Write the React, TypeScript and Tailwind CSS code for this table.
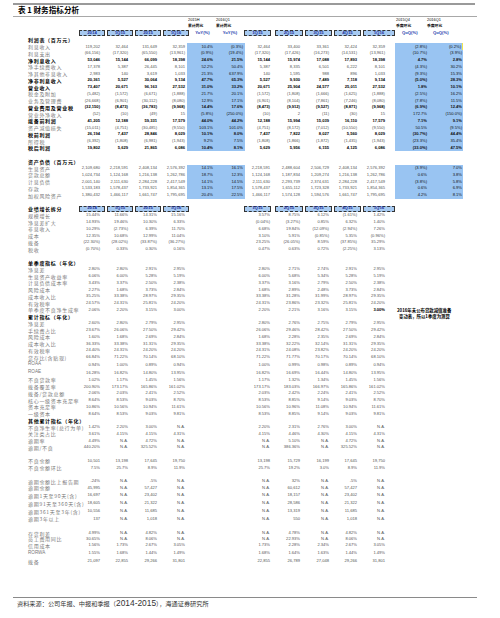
import React from "react";

type Row = {
  t: "d" | "h" | "b" | "x";
  label?: string;
  l?: string[];
  r?: string[];
  bold?: boolean;
  h?: string;
  blue?: boolean;
  note?: string;
  boldLast?: boolean;
  mark?: boolean;
};

const NA = "N.A.";

const rows: Row[] = [
  { t: "h", label: "利润表（百万元）" },
  { t: "d", blue: true, mark: true, label: "利息收入", l: ["119,202", "32,464", "131,649", "32,359", "10.4%", "(0.3%)"], r: ["32,464", "33,400", "33,361", "32,424", "32,359", "(2.8%)", "(0.2%)"] },
  { t: "d", blue: true, label: "利息支出", l: ["(66,156)", "(17,320)", "(65,550)", "(13,961)", "(0.9%)", "(19.4%)"], r: ["(17,320)", "(17,426)", "(16,273)", "(14,531)", "(13,961)", "(10.7%)", "(3.9%)"] },
  { t: "d", blue: true, bold: true, label: "净利息收入", l: ["53,046", "15,144", "66,099", "18,398", "24.6%", "21.5%"], r: ["15,144", "15,974", "17,088", "17,893", "18,398", "4.7%", "2.8%"] },
  { t: "d", blue: true, label: "净手续费收入", l: ["17,378", "5,387", "26,445", "8,101", "52.2%", "50.4%"], r: ["5,387", "8,335", "6,501", "6,222", "8,101", "(4.3%)", "30.2%"] },
  { t: "d", blue: true, label: "净其他非息收入", l: ["2,983", "140", "3,619", "1,033", "21.3%", "637.9%"], r: ["140", "1,595", "988", "896", "1,033", "(9.3%)", "15.3%"] },
  { t: "d", blue: true, bold: true, label: "净非利息收入", l: ["20,361", "5,527", "30,064", "9,134", "47.7%", "65.3%"], r: ["5,527", "9,930", "7,489", "7,118", "9,134", "(5.0%)", "28.3%"] },
  { t: "d", blue: true, bold: true, label: "营业收入", l: ["73,407", "20,671", "96,163", "27,532", "31.0%", "33.2%"], r: ["20,671", "25,904", "24,577", "25,011", "27,532", "1.8%", "10.1%"] },
  { t: "d", blue: true, label: "税金及附加", l: ["(5,482)", "(1,572)", "(6,671)", "(1,888)", "21.7%", "20.1%"], r: ["(1,572)", "(1,808)", "(1,666)", "(1,625)", "(1,888)", "(2.5%)", "16.2%"] },
  { t: "d", blue: true, label: "业务及管理费", l: ["(26,668)", "(6,901)", "(30,112)", "(8,080)", "12.9%", "17.1%"], r: ["(6,901)", "(8,104)", "(7,861)", "(7,246)", "(8,080)", "(7.8%)", "11.5%"] },
  { t: "d", blue: true, bold: true, label: "营业费用及营业税", l: ["(32,150)", "(8,473)", "(36,783)", "(9,968)", "14.4%", "17.6%"], r: ["(8,473)", "(9,912)", "(9,527)", "(8,871)", "(9,968)", "(6.9%)", "12.4%"] },
  { t: "d", blue: true, label: "营业外净收入", l: ["(52)", "(10)", "(49)", "15", "(5.8%)", "(250.0%)"], r: ["(10)", "2", "(11)", "(30)", "15", "172.7%", "(150.0%)"] },
  { t: "d", blue: true, bold: true, label: "拨备前利润", l: ["41,205", "12,188", "59,331", "17,579", "44.0%", "44.2%"], r: ["12,188", "15,994", "15,039", "16,110", "17,579", "7.1%", "9.1%"] },
  { t: "d", blue: true, label: "资产减值损失", l: ["(15,011)", "(4,751)", "(30,485)", "(9,550)", "103.1%", "101.0%"], r: ["(4,751)", "(8,172)", "(7,012)", "(10,550)", "(9,550)", "50.5%", "(9.5%)"] },
  { t: "d", blue: true, bold: true, label: "税前利润", l: ["26,194", "7,437", "28,846", "8,029", "10.1%", "8.0%"], r: ["7,437", "7,822", "8,027", "5,560", "8,029", "(30.7%)", "44.4%"] },
  { t: "d", blue: true, label: "所得税", l: ["(6,392)", "(1,808)", "(6,981)", "(1,943)", "9.2%", "7.5%"], r: ["(1,808)", "(1,866)", "(1,872)", "(1,435)", "(1,943)", "(23.3%)", "35.4%"] },
  { t: "d", blue: true, bold: true, label: "税后利润", l: ["19,802", "5,629", "21,865", "6,086", "10.4%", "8.1%"], r: ["5,629", "5,956", "6,155", "4,125", "6,086", "(33.0%)", "47.5%"] },
  { t: "b" },
  { t: "h", label: "资产负债（百万元）" },
  { t: "d", blue: true, label: "生息资产", l: ["2,109,680", "2,218,591", "2,408,134", "2,576,392", "14.1%", "16.1%"], r: ["2,218,591", "2,488,604", "2,506,729", "2,408,134", "2,576,392", "(3.9%)", "7.0%"] },
  { t: "d", blue: true, label: "贷款总额", l: ["1,024,734", "1,124,168", "1,216,138", "1,262,786", "18.7%", "12.3%"], r: ["1,124,168", "1,187,834", "1,209,274", "1,216,138", "1,262,786", "0.6%", "3.8%"] },
  { t: "d", blue: true, label: "计息负债", l: ["2,001,140", "2,111,630", "2,284,228", "2,417,549", "14.1%", "14.5%"], r: ["2,111,630", "2,293,739", "2,374,631", "2,284,228", "2,417,549", "(3.8%)", "5.8%"] },
  { t: "d", blue: true, label: "存款", l: ["1,533,183", "1,578,437", "1,733,921", "1,854,365", "13.1%", "17.5%"], r: ["1,578,437", "1,655,112", "1,723,328", "1,733,921", "1,854,365", "0.6%", "6.9%"] },
  { t: "d", blue: true, label: "加权风险资产", l: ["1,380,432", "1,466,117", "1,661,747", "1,795,695", "20.4%", "22.5%"], r: ["1,466,117", "1,574,128", "1,594,576", "1,661,747", "1,795,695", "4.2%", "8.1%"] },
  { t: "b" },
  { t: "x", label: "业绩增长拆分" },
  { t: "d", label: "规模增长", l: ["15.44%", "11.66%", "14.31%", "15.16%"], r: ["3.57%", "8.75%", "6.12%", "(1.61%)", "1.42%"] },
  { t: "d", label: "净息差扩大", l: ["14.93%", "19.46%", "10.30%", "6.33%"], r: ["(0.04%)", "(3.27%)", "0.85%", "6.32%", "1.40%"] },
  { t: "d", label: "非息收入", l: ["10.29%", "(2.73%)", "6.39%", "11.70%"], r: ["6.68%", "19.84%", "(12.09%)", "(2.94%)", "7.26%"] },
  { t: "d", label: "成本", l: ["12.35%", "10.68%", "12.99%", "11.04%"], r: ["3.10%", "5.91%", "(0.85%)", "5.35%", "(0.96%)"] },
  { t: "d", label: "拨备", l: ["(22.30%)", "(28.02%)", "(33.87%)", "(36.27%)"], r: ["23.25%", "(26.05%)", "8.59%", "(37.85%)", "35.29%"] },
  { t: "d", label: "税收", l: ["(0.70%)", "0.33%", "0.30%", "0.16%"], r: ["0.47%", "0.63%", "0.72%", "(2.25%)", "3.13%"] },
  { t: "b" },
  { t: "h", label: "单季度指标（年化）" },
  { t: "d", label: "净息差", l: ["2.80%", "2.80%", "2.91%", "2.95%"], r: ["2.80%", "2.71%", "2.74%", "2.91%", "2.95%"] },
  { t: "d", label: "生息资产收益率", l: ["6.06%", "6.00%", "5.28%", "5.19%"], r: ["6.00%", "5.68%", "5.34%", "5.28%", "5.19%"] },
  { t: "d", label: "计息负债成本率", l: ["3.43%", "3.37%", "2.50%", "2.38%"], r: ["3.37%", "3.16%", "2.79%", "2.50%", "2.38%"] },
  { t: "d", label: "风险成本", l: ["2.27%", "1.68%", "3.73%", "2.84%"], r: ["1.68%", "2.89%", "2.48%", "3.73%", "2.84%"] },
  { t: "d", label: "成本收入比", l: ["35.25%", "33.38%", "28.97%", "29.35%"], r: ["33.38%", "31.28%", "31.99%", "28.97%", "29.35%"] },
  { t: "d", label: "有效税率", l: ["24.57%", "24.31%", "25.81%", "24.20%"], r: ["24.31%", "23.86%", "23.32%", "25.81%", "24.20%"] },
  { t: "d", label: "单季度不良净生成率", l: ["2.06%", "2.20%", "3.15%", "3.00%"], r: ["2.20%", "2.21%", "3.16%", "3.15%", "3.00%"], boldLast: true, note: "2016年未公布贷款减值准备" },
  { t: "h", label: "累计指标（年化）", note: "变动表，所以1季度为测算" },
  { t: "d", label: "净息差", l: ["2.60%", "2.80%", "2.79%", "2.95%"], r: ["2.80%", "2.76%", "2.75%", "2.79%", "2.95%"] },
  { t: "d", label: "手续费占比", l: ["23.67%", "26.06%", "27.50%", "29.42%"], r: ["26.06%", "29.46%", "28.42%", "27.50%", "29.42%"] },
  { t: "d", label: "风险成本", l: ["1.60%", "1.68%", "2.69%", "2.84%"], r: ["1.68%", "2.28%", "2.35%", "2.69%", "2.84%"] },
  { t: "d", label: "成本收入比", l: ["36.33%", "33.38%", "31.31%", "29.35%"], r: ["33.38%", "32.22%", "32.14%", "31.31%", "29.35%"] },
  { t: "d", label: "有效税率", l: ["24.40%", "24.31%", "24.20%", "24.20%"], r: ["24.31%", "24.08%", "23.82%", "24.20%", "24.20%"] },
  { t: "d", label: "贷存比(含贴现)", l: ["66.84%", "71.22%", "70.14%", "68.10%"], r: ["71.22%", "71.77%", "70.17%", "70.14%", "68.10%"] },
  { t: "d", h: "h-[8.5px]", label: "ROAA", l: ["0.94%", "1.00%", "0.89%", "0.94%"], r: ["1.00%", "0.99%", "0.98%", "0.89%", "0.94%"] },
  { t: "d", h: "h-[7.5px]", label: "ROAE", l: ["16.28%", "16.82%", "14.80%", "13.95%"], r: ["16.82%", "16.69%", "16.44%", "14.80%", "13.95%"] },
  { t: "d", label: "不良贷款率", l: ["1.02%", "1.17%", "1.45%", "1.56%"], r: ["1.17%", "1.32%", "1.34%", "1.45%", "1.56%"] },
  { t: "d", label: "拨备覆盖率", l: ["200.90%", "173.17%", "165.86%", "161.02%"], r: ["173.17%", "183.03%", "166.97%", "165.86%", "161.02%"] },
  { t: "d", label: "拨备/贷款总额", l: ["2.06%", "2.03%", "2.41%", "2.52%"], r: ["2.03%", "2.42%", "2.24%", "2.41%", "2.52%"] },
  { t: "d", label: "核心一级资本充足率", l: ["8.64%", "8.53%", "9.03%", "8.70%"], r: ["8.53%", "8.85%", "9.14%", "9.03%", "8.70%"] },
  { t: "d", label: "资本充足率", l: ["10.86%", "10.56%", "10.94%", "11.61%"], r: ["10.56%", "10.96%", "11.08%", "10.94%", "11.61%"] },
  { t: "d", label: "一级资本", l: ["8.64%", "8.53%", "9.03%", "9.81%"], r: ["8.53%", "8.85%", "9.14%", "9.03%", "9.81%"] },
  { t: "h", label: "其他累计指标（年化）" },
  { t: "d", label: "不良净生率(总行为单)", l: ["1.42%", "2.20%", "3.00%", NA], r: ["2.20%", "2.31%", "2.76%", "3.00%", NA] },
  { t: "d", label: "关注类占比", l: ["3.61%", "4.15%", "4.15%", "4.31%"], r: ["4.15%", "4.46%", "4.30%", "4.15%", "4.31%"] },
  { t: "d", label: "逾期率", l: ["4.49%", NA, "4.72%", NA], r: [NA, "5.10%", NA, "4.72%", NA] },
  { t: "d", label: "逾期/不良", l: ["440.20%", NA, "325.52%", NA], r: [NA, "386.36%", NA, "325.52%", NA] },
  { t: "b" },
  { t: "d", label: "不良余额", l: ["10,501", "13,198", "17,645", "19,750"], r: ["13,198", "15,729", "16,199", "17,645", "19,750"] },
  { t: "d", label: "不良余额环比", l: ["7.5%", "25.7%", "8.9%", "11.9%"], r: ["25.7%", "19.2%", "3.0%", "8.9%", "11.9%"] },
  { t: "b" },
  { t: "d", label: "逾期余额比上报告期", l: ["-24%", NA, "-5%", NA], r: [NA, "32%", NA, "-5%", NA] },
  { t: "d", label: "逾期余额", l: ["45,995", NA, "57,427", NA], r: [NA, "60,612", NA, "57,427", NA] },
  { t: "d", h: "h-[7.5px]", label: "逾期1天至90天(含)", l: ["16,697", NA, "23,402", NA], r: [NA, "18,157", NA, "23,402", NA] },
  { t: "d", h: "h-[8.5px]", label: "逾期91天至360天(含)", l: ["18,605", NA, "21,322", NA], r: [NA, "28,586", NA, "21,322", NA] },
  { t: "d", h: "h-[8px]", label: "逾期361天至3年(含)", l: ["10,556", NA, "11,685", NA], r: [NA, "13,319", NA, "11,685", NA] },
  { t: "d", label: "逾期3年以上", l: ["137", NA, "1,018", NA], r: [NA, "550", NA, "1,018", NA] },
  { t: "b", h: "h-[8.4px]" },
  { t: "d", h: "h-[5.7px]", label: "存贷利差", l: ["4.99%", NA, "4.82%", NA], r: [NA, "4.78%", NA, "4.82%", NA] },
  { t: "d", h: "h-[5.7px]", label: "员工费用同比", l: ["30.65%", NA, "8.06%", NA], r: [NA, "22.93%", NA, "8.06%", NA] },
  { t: "d", h: "h-[6.5px]", label: "信用成本", l: ["1.56%", "1.73%", "2.67%", "3.05%"], r: ["1.73%", "2.28%", "2.34%", "2.67%", "3.05%"] },
  { t: "d", h: "h-[10px]", label: "RORWA", l: ["1.55%", "1.68%", "1.44%", "1.49%"], r: ["1.68%", "1.64%", "1.63%", "1.44%", "1.49%"] },
  { t: "d", h: "h-[6.5px]", label: "拨备", l: ["21,097", "22,855", "29,266", "31,801"], r: ["22,855", "26,789", "27,048", "29,266", "31,801"] },
];

const lw = ["w-[28px] pr-[3px]", "w-[28px] pr-[3px]", "w-[28px] pr-[2px]", "w-[28px] pr-[2px]", "w-[29px] pr-[3px]", "w-[29px] pr-[2px]"];
const rw = ["w-[27px] pr-[2px]", "w-[29px] pr-[1px]", "w-[29px] pr-[1px]", "w-[28px] pr-[1px]", "w-[28px] pr-[1px]"];
const qw = ["w-[34px] pr-[2px]", "w-[34px] pr-[1px]"];

const box = "h-[6px] shrink-0 flex items-center justify-center bg-[#a6c9f0] border border-dashed border-[#333] text-[4.3px] font-bold text-[#1f2f9c]";

function Label({ text, bold }: { text?: string; bold?: boolean }) {
  const latin = text ? /^[A-Z]+$/.test(text) : false;
  return (
    <div
      className={`w-[75px] shrink-0 pl-[28px] whitespace-nowrap leading-none ${
        latin ? "text-[4.6px]" : "text-[5px] tracking-[0.7px] font-['Noto_Sans_CJK_SC',sans-serif]"
      } ${bold ? "font-bold text-black" : "text-[#777]"}`}
    >
      {text}
    </div>
  );
}

function Note({ text, pl }: { text?: string; pl: string }) {
  if (!text) return null;
  return (
    <div className={`${pl} whitespace-nowrap text-[4.4px] font-bold text-black font-['Noto_Sans_CJK_SC',sans-serif] leading-none`}>{text}</div>
  );
}

function DataRow({ row }: { row: Row }) {
  const l = row.l ?? [];
  const r = row.r ?? [];
  const tone = row.bold ? "font-bold text-black" : "text-[#555]";
  return (
    <div className={`flex items-center ${row.h ?? "h-[6.75px]"} text-[4.1px] leading-none`}>
      <Label text={row.label} bold={row.bold} />
      {lw.map((w, i) => (
        <div
          key={i}
          className={`${w} shrink-0 h-full flex items-center justify-end whitespace-nowrap ${
            i >= 4 && row.blue ? "bg-[#99c4f2] !text-[#111]" : ""
          } ${tone}`}
        >
          {l[i] ?? ""}
        </div>
      ))}
      {rw.map((w, i) => (
        <div
          key={i}
          className={`${w} shrink-0 h-full flex items-center justify-end whitespace-nowrap ${tone} ${
            row.boldLast && i === 4 ? "font-bold !text-black" : ""
          }`}
        >
          {r[i] ?? ""}
        </div>
      ))}
      <div className="w-[9px] shrink-0" />
      {row.note ? (
        <Note text={row.note} pl="pl-[2px]" />
      ) : (
        qw.map((w, i) => (
          <div
            key={i}
            className={`${w} shrink-0 h-full flex items-center justify-end whitespace-nowrap ${
              row.blue ? "bg-[#99c4f2] !text-[#111]" : ""
            } ${tone} ${row.mark && i === 1 ? "border-r-[1.5px] border-[#f3e64a]" : ""}`}
          >
            {r[i + 5] ?? ""}
          </div>
        ))
      )}
    </div>
  );
}

function Boxes({ yoy }: { yoy?: boolean }) {
  return (
    <>
      <div className={`${box} ml-[4px] w-[26px]`}>2014</div>
      <div className={`${box} ml-[2px] w-[26px]`}>1Q15</div>
      <div className={`${box} ml-[2px] w-[26px]`}>2015</div>
      <div className={`${box} ml-[2px] w-[26px]`}>1Q16</div>
      {yoy ? (
        <>
          <div className="w-[27px] shrink-0 text-center text-[4.2px] font-bold text-[#2a3fb0]">YoY(%)</div>
          <div className="w-[28px] shrink-0 text-center text-[4.2px] font-bold text-[#2a3fb0]">YoY(%)</div>
        </>
      ) : (
        <div className="w-[55px] shrink-0" />
      )}
      <div className={`${box} w-[27px]`}>1Q15</div>
      <div className={`${box} ml-[4px] w-[28px]`}>2Q15</div>
      <div className={`${box} ml-[2px] w-[27px]`}>3Q15</div>
      <div className={`${box} ml-[2px] w-[27px]`}>4Q15</div>
      <div className={`${box} ml-[2px] w-[32px]`}>1Q16</div>
      {yoy && (
        <>
          <div className="w-[32px] shrink-0 pl-[7px] text-[4.2px] font-bold text-[#2a3fb0]">QoQ(%)</div>
          <div className="w-[34px] shrink-0 pl-[6px] text-[4.2px] font-bold text-[#2a3fb0]">QoQ(%)</div>
        </>
      )}
    </>
  );
}

export default function App() {
  return (
    <div className="w-[500px] h-[618px] bg-white overflow-hidden font-['Liberation_Sans',Arial,sans-serif]">
      <div className="pt-[3px]">
        <div className="ml-[13px] w-[462px] h-[1.5px] bg-[#9a9a9a]" />
        <div className="h-[11px] flex items-center pl-[18px] text-[7.6px] font-bold text-black font-['Noto_Sans_CJK_SC',sans-serif]">
          表 1 财务指标分析
        </div>
        <div className="ml-[13px] w-[464px] h-[1px] bg-[#a8a8a8]" />

        {/* column headers */}
        <div className="flex items-center h-[6.5px] text-[3.9px] leading-none text-black">
          <div className="w-[188px] shrink-0" />
          <div className="w-[28px] shrink-0">2015H</div>
          <div className="w-[180px] shrink-0">2016Q1</div>
          <div className="w-[31px] shrink-0">2015Q4</div>
          <div>2016Q1</div>
        </div>
        <div className="flex items-center h-[6.5px] text-[3.8px] leading-none font-bold text-black font-['Noto_Sans_CJK_SC',sans-serif]">
          <div className="w-[188px] shrink-0" />
          <div className="w-[28px] shrink-0">累计同比</div>
          <div className="w-[180px] shrink-0">累计同比</div>
          <div className="w-[31px] shrink-0">季度环比</div>
          <div>季度环比</div>
        </div>
        <div className="flex items-center h-[7px] leading-none">
          <div className="w-[75px] shrink-0" />
          <Boxes yoy />
        </div>

        {rows.map((row, i) => {
          if (row.t === "b") return <div key={i} className={row.h ?? "h-[6.75px]"} />;
          if (row.t === "h")
            return (
              <div key={i} className="flex items-center h-[6.75px]">
                <Label text={row.label} bold />
                <div className="w-[320px] shrink-0" />
                <Note text={row.note} pl="pl-[4px]" />
              </div>
            );
          if (row.t === "x")
            return (
              <div key={i} className="flex items-center h-[6.75px] leading-none">
                <Label text={row.label} bold />
                <Boxes />
              </div>
            );
          return <DataRow key={i} row={row} />;
        })}

        <div className="h-[32px]" />
        <div className="ml-[13px] w-[464px] h-[1.5px] bg-[#8a8a8a]" />
        <div className="h-[10px] flex items-center pl-[17px] text-[6.2px] text-[#333] font-['Noto_Sans_CJK_SC',sans-serif] whitespace-nowrap">
          资料来源：公司年报、中报和季报（<span className="text-[8.4px] font-['Liberation_Sans',sans-serif]">2014-2015</span>），海通证券研究所
        </div>
        <div className="h-[11px]" />
        <div className="ml-[18px] w-[469px] h-[1px] bg-[#c9c9df]" />
      </div>
    </div>
  );
}
